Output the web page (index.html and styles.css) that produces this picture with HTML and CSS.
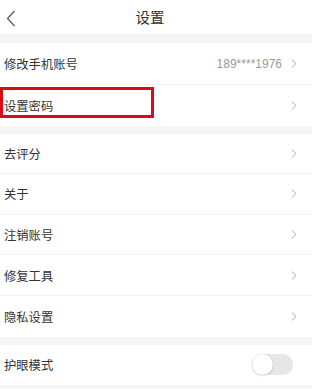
FILE: index.html
```html
<!DOCTYPE html>
<html lang="zh">
<head>
<meta charset="utf-8">
<link rel="stylesheet" href="styles.css">
</head>
<body>
<div class="page">
  <header class="header">
    <svg class="back" width="10" height="17" viewBox="0 0 10 17"><path d="M8.5 1 L1.5 8.5 L8.5 16" fill="none" stroke="#555" stroke-width="1.2"/></svg>
    <div class="title">设置</div>
  </header>
  <section class="group">
    <div class="row first"><span class="label">修改手机账号</span><span class="value">189****1976</span><svg class="chev" width="6" height="9" viewBox="0 0 6 9"><path d="M0.8 0.5 L5 4.5 L0.8 8.5" fill="none" stroke="#aaa" stroke-width="1"/></svg></div>
    <div class="row last"><span class="label">设置密码</span><svg class="chev" width="6" height="9" viewBox="0 0 6 9"><path d="M0.8 0.5 L5 4.5 L0.8 8.5" fill="none" stroke="#aaa" stroke-width="1"/></svg><div class="mark"></div></div>
  </section>
  <section class="group">
    <div class="row"><span class="label">去评分</span><svg class="chev" width="6" height="9" viewBox="0 0 6 9"><path d="M0.8 0.5 L5 4.5 L0.8 8.5" fill="none" stroke="#aaa" stroke-width="1"/></svg></div>
    <div class="row"><span class="label">关于</span><svg class="chev" width="6" height="9" viewBox="0 0 6 9"><path d="M0.8 0.5 L5 4.5 L0.8 8.5" fill="none" stroke="#aaa" stroke-width="1"/></svg></div>
    <div class="row"><span class="label">注销账号</span><svg class="chev" width="6" height="9" viewBox="0 0 6 9"><path d="M0.8 0.5 L5 4.5 L0.8 8.5" fill="none" stroke="#aaa" stroke-width="1"/></svg></div>
    <div class="row"><span class="label">修复工具</span><svg class="chev" width="6" height="9" viewBox="0 0 6 9"><path d="M0.8 0.5 L5 4.5 L0.8 8.5" fill="none" stroke="#aaa" stroke-width="1"/></svg></div>
    <div class="row last"><span class="label">隐私设置</span><svg class="chev" width="6" height="9" viewBox="0 0 6 9"><path d="M0.8 0.5 L5 4.5 L0.8 8.5" fill="none" stroke="#aaa" stroke-width="1"/></svg></div>
  </section>
  <section class="group">
    <div class="row last"><span class="label">护眼模式</span><span class="switch"><span class="knob"></span></span></div>
  </section>
</div>
</body>
</html>
```
FILE: styles.css
```css
* { box-sizing: border-box; }
html, body { margin: 0; padding: 0; }
body {
  background: #f5f5f5;
  font-family: "Noto Sans CJK SC", "Noto Sans", sans-serif;
  color: #333;
}
.page { width: 312px; height: 389px; overflow: hidden; }
.header {
  height: 34px;
  background: #fff;
  position: relative;
  display: flex;
  align-items: center;
  justify-content: center;
  margin-bottom: 9px;
}
.back { position: absolute; left: 6px; top: 10px; }
.title { font-size: 14.5px; color: #333; margin-right: 12px; line-height: 1; }
.group { background: #fff; margin-bottom: 8px; }
.row {
  position: relative;
  height: 40.6px;
  display: flex;
  align-items: center;
  padding-left: 4px;
  padding-right: 15px;
  border-bottom: 1px solid #f3f3f3;
  font-size: 12.3px;
}
.row.first { height: 42px; }
.row.last { border-bottom: none; }
.label { flex: 1; line-height: 1; padding-top: 1px; }
.value { color: #9a9a9a; font-family: "Liberation Sans", Arial, sans-serif; font-size: 12px; margin-right: 9px; }
.chev { display: block; }
.mark {
  position: absolute;
  left: 0; top: 2px;
  width: 154px; height: 31px;
  border: 3px solid #dc0a14;
}
.switch {
  width: 41px; height: 21px;
  border-radius: 11px;
  background: #e6e6e6;
  margin-right: 4px;
  position: relative;
}
.knob {
  position: absolute; left: 0; top: 0;
  width: 21px; height: 21px; border-radius: 50%;
  background: #fff;
  box-shadow: 0 0 1px rgba(0,0,0,0.25), 0 1px 2px rgba(0,0,0,0.12);
}
```
